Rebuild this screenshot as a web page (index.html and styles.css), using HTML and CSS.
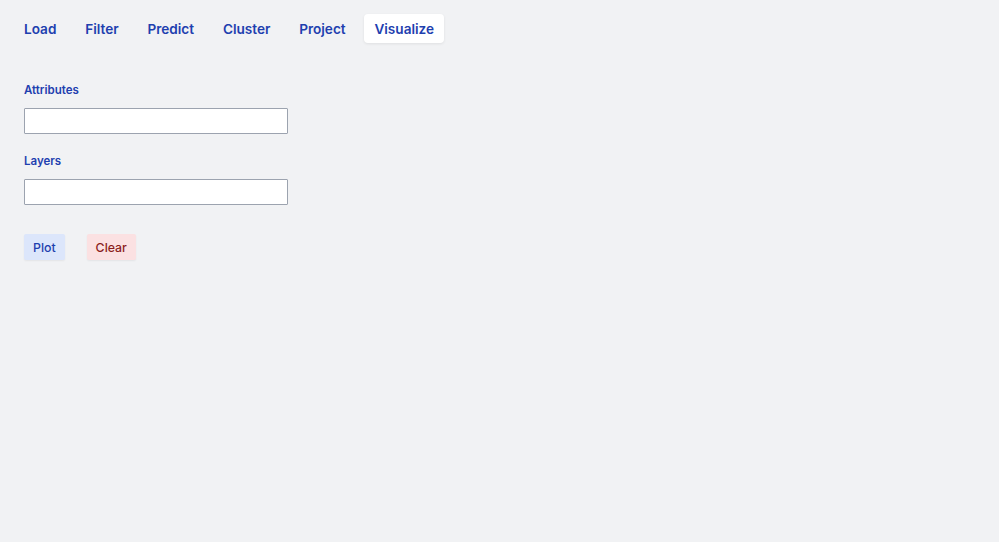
FILE: index.html
```html
<!DOCTYPE html>
<html lang="en">
<head>
    <meta charset="UTF-8">
    <meta name="viewport" content="width=device-width, initial-scale=1.0">
    <title>Visualize</title>
    <link rel="stylesheet" href="styles.css">
</head>
<body>
    <div class="container">
        <!-- tabs -->
        <nav class="tabs">
            <button class="tab">Load</button>
            <button class="tab">Filter</button>
            <button class="tab">Predict</button>
            <button class="tab">Cluster</button>
            <button class="tab">Project</button>
            <button class="tab active">Visualize</button>
        </nav>

        <div class="panel">
            <div class="field">
                <label for="attributes">Attributes</label>
                <input id="attributes" type="text">
            </div>
            <div class="field">
                <label for="layers">Layers</label>
                <input id="layers" type="text">
            </div>

            <div class="actions">
                <button class="btn btn-plot">Plot</button>
                <button class="btn btn-clear">Clear</button>
            </div>
        </div>
    </div>
</body>
</html>
```

FILE: styles.css
```css
* {
    margin: 0;
    padding: 0;
    box-sizing: border-box;
    font-family: 'Inter', 'Noto Sans', sans-serif;
}

html, body {
    height: 100%;
}

body {
    background: #f1f2f4;
    color: #1e40af;
}

.container {
    padding: 14px 14px;
}

.tabs {
    display: flex;
    gap: 8.8px;
}

.tab {
    background: transparent;
    border: none;
    border-radius: 4px;
    padding: 0 10px;
    height: 29px;
    font-size: 13.6px;
    font-weight: 600;
    color: #1e40af;
    cursor: pointer;
}

.tab.active {
    background: white;
    box-shadow: 0 1px 3px rgba(0, 0, 0, 0.08);
}

.panel {
    padding: 40px 10px 0;
}

.field {
    display: flex;
    flex-direction: column;
    margin-bottom: 20px;
}

.field label {
    font-size: 11.5px;
    font-weight: 600;
    color: #1e40af;
    line-height: 14px;
    margin-bottom: 11px;
}

.field input {
    width: 264px;
    height: 26px;
    border: 1px solid #9ca3af;
    border-radius: 1px;
    background: white;
    font-size: 13px;
    padding: 0 6px;
}

.actions {
    display: flex;
    gap: 22px;
    margin-top: 29px;
}

.btn {
    border: none;
    border-radius: 2px;
    height: 26px;
    padding: 0 9px;
    font-size: 12.3px;
    font-weight: 500;
    cursor: pointer;
    box-shadow: 0 1px 2px rgba(0, 0, 0, 0.06);
}

.btn-plot {
    background: #dce6fb;
    color: #1e40af;
}

.btn-clear {
    background: #fbe1e2;
    color: #8b1d1d;
}
```
